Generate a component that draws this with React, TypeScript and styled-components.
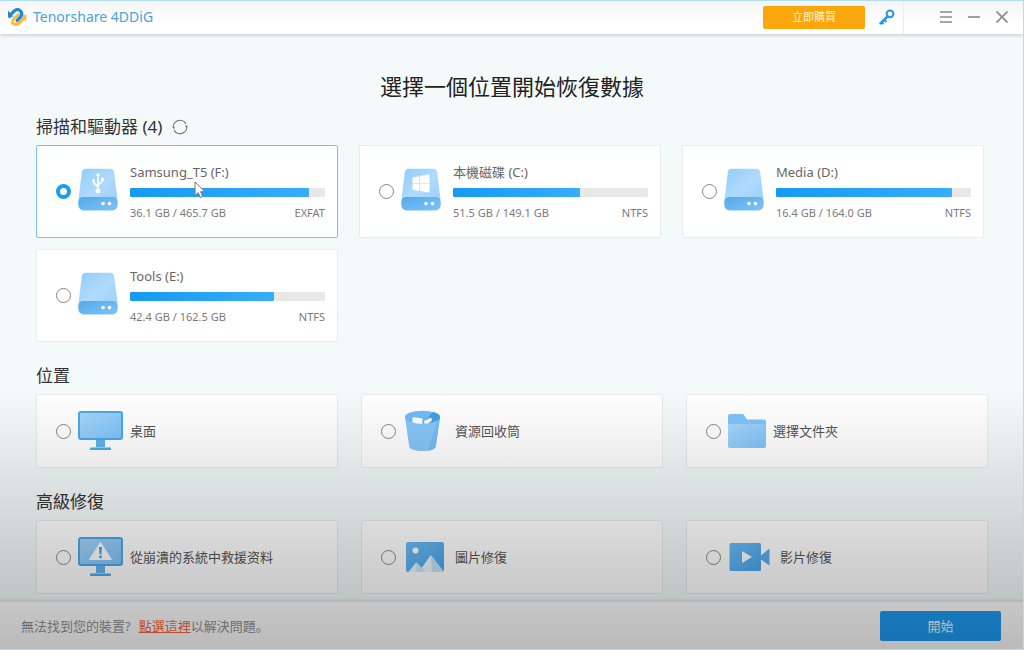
import React, { useState } from "react";
import styled, { createGlobalStyle } from "styled-components";

const GlobalStyle = createGlobalStyle`
  *, *::before, *::after { box-sizing: border-box; }
  body {
    margin: 0;
    background: #f4fafa;
    color: #333;
    font-family: "Noto Sans", "Noto Sans CJK SC", sans-serif;
    font-size: 13px;
  }
  button { font-family: inherit; cursor: pointer; }
`;

const Window = styled.div`
  position: relative;
  display: flex;
  flex-direction: column;
  min-height: 100vh;
`;

const Shade = styled.div`
  position: absolute;
  inset: 0;
  pointer-events: none;
  border: solid #b4dcf0;
  border-width: 1px 1px 1px 0;
  background: linear-gradient(to bottom, rgba(0, 0, 0, 0) 60%, rgba(0, 0, 0, 0.27) 100%);
`;

const Header = styled.header`
  display: flex;
  align-items: center;
  height: 34px;
  padding: 0 15px 0 7px;
  background: linear-gradient(to bottom, #f3f4f5, #ffffff 70%);
  box-shadow: 0 1px 4px rgba(0, 0, 0, 0.22);
`;

const Brand = styled.div`
  display: flex;
  flex: 1;
  align-items: center;
  gap: 6px;
  color: #4ba3da;
  font-size: 14px;
  line-height: 20px;
`;

const BuyButton = styled.button`
  width: 102px;
  height: 23px;
  padding: 0;
  border: 0;
  border-radius: 2px;
  background: #fba60c;
  color: #fff4cf;
  font-size: 11px;
  line-height: 16px;
`;

const IconButton = styled.button`
  display: flex;
  align-items: center;
  justify-content: center;
  width: 28px;
  height: 28px;
  padding: 0;
  border: 0;
  background: transparent;
`;

const KeyButton = styled(IconButton)`
  margin-left: 8px;
`;

const WindowControls = styled.div`
  display: flex;
  align-items: center;
  height: 34px;
  margin-left: 2px;
  padding-left: 28px;
  border-left: 1px solid #ececec;
  margin-right: -7px;
`;

const Main = styled.main`
  display: flex;
  flex: 1;
  flex-direction: column;
  padding: 36px 36px 7px;
`;

const Title = styled.h1`
  margin: 0 0 13px;
  color: #222;
  font-size: 22px;
  font-weight: 400;
  line-height: 32px;
  text-align: center;
`;

const Section = styled.section`
  & + & { margin-top: 22px; }
`;

const SectionTitle = styled.h2`
  display: flex;
  align-items: center;
  gap: 6px;
  margin: 0 0 6px;
  color: #333;
  font-size: 17px;
  font-weight: 400;
  line-height: 24px;
`;

const RefreshButton = styled(IconButton)`
  width: 24px;
  height: 24px;
`;

const DriveGrid = styled.div`
  display: grid;
  grid-template-columns: repeat(3, 1fr);
  gap: 11px 21px;
  margin-right: 4px;
`;

const PlaceGrid = styled.div`
  display: grid;
  grid-template-columns: repeat(3, 1fr);
  gap: 23px;
`;

const Card = styled.label<{ $selected: boolean }>`
  display: flex;
  align-items: center;
  padding: 0 12px 0 19px;
  border: 1px solid ${(p) => (p.$selected ? "#7fbfea" : "#e9ecec")};
  border-radius: 2px;
  background: #fff;
  cursor: pointer;
`;

const DriveCard = styled(Card)`
  min-height: 93px;
`;

const PlaceCard = styled(Card)`
  min-height: 74px;
`;

const Radio = styled.input`
  appearance: none;
  flex: none;
  width: 15px;
  height: 15px;
  margin: 0 7px 0 0;
  border: 1px solid #858585;
  border-radius: 50%;
  background: transparent;
  &:checked { border: 4px solid #1a9bf3; }
`;

const DriveInfo = styled.div`
  position: relative;
  display: flex;
  flex: 1;
  flex-direction: column;
  min-width: 0;
  margin-left: 12px;
`;

const DriveName = styled.span`
  color: #666;
  font-size: 13px;
  line-height: 20px;
`;

const Track = styled.div`
  height: 9px;
  margin: 6px 0 7px;
  overflow: hidden;
  border-radius: 1px;
  background: #e8e8e8;
`;

const Fill = styled.div`
  height: 100%;
  border-radius: 1px;
  background: linear-gradient(to right, #159af3, #37adfb);
`;

const DriveMeta = styled.div`
  display: flex;
  justify-content: space-between;
  color: #7a7a7a;
  font-size: 11px;
  line-height: 18px;
`;

const Pointer = styled.svg`
  position: absolute;
  top: 19px;
  left: 64px;
`;

const PlaceName = styled.span`
  margin-left: 7px;
  color: #555;
  font-size: 13px;
  line-height: 20px;
`;

const Footer = styled.footer`
  display: flex;
  align-items: center;
  justify-content: space-between;
  min-height: 49px;
  padding: 0 23px 0 21px;
  border-top: 1px solid #eee;
  background: #fff;
  box-shadow: 0 -1px 2px rgba(0, 0, 0, 0.1);
`;

const Hint = styled.p`
  margin: 0;
  color: #929292;
  font-size: 13px;
  line-height: 20px;
`;

const HintLink = styled.a`
  margin-left: 8px;
  color: #f8693a;
`;

const StartButton = styled.button`
  width: 121px;
  height: 30px;
  padding: 0;
  border: 0;
  border-radius: 2px;
  background: #1e9cf5;
  color: #f4faff;
  font-size: 13px;
  line-height: 20px;
`;

const Defs = () => (
  <svg width="0" height="0" style={{ position: "absolute" }} aria-hidden="true">
    <defs>
      <linearGradient id="body" x1="0" y1="0" x2="1" y2="1">
        <stop offset="0" stopColor="#8fccfb" />
        <stop offset="0.5" stopColor="#b0dafc" />
        <stop offset="1" stopColor="#9bd0fb" />
      </linearGradient>
      <linearGradient id="base" x1="0" y1="0" x2="1" y2="1">
        <stop offset="0" stopColor="#55a9ea" />
        <stop offset="1" stopColor="#7cc3fa" />
      </linearGradient>
      <linearGradient id="screen" x1="0" y1="0" x2="1" y2="1">
        <stop offset="0" stopColor="#a9d7fb" />
        <stop offset="1" stopColor="#7bc2fa" />
      </linearGradient>
      <linearGradient id="solid" x1="0" y1="0" x2="1" y2="1">
        <stop offset="0" stopColor="#6cbcf6" />
        <stop offset="1" stopColor="#48a5ec" />
      </linearGradient>
    </defs>
  </svg>
);

const LogoIcon = () => (
  <svg width="20" height="20" viewBox="0 0 20 20" fill="none" aria-hidden="true">
    <path d="M4.500 14.500c2.200 3.400 5.500 3.600 7.700 1.400l4.300-4.600c.9-1 1-1.900.9-3.100" stroke="#fbb83a" strokeWidth="3.200" />
    <path d="M6 13l5.300-5.700" stroke="#fbb83a" strokeWidth="2.600" strokeLinecap="round" />
    <path d="M2.700 9.500c-.2-.7.300-1.200 1-1.900l2.600-2.700C8.700 2.400 11.500 1.800 13.600 4c2 2.300 1.200 4.400-.4 6.100l-3 3.200" stroke="#2389cf" strokeWidth="3.200" strokeLinecap="round" />
    <path d="M1 3.500v6.200h5.700z" fill="#2389cf" />
    <path d="M19.300 7v6.500l-5.300-.6z" fill="#fbb83a" />
  </svg>
);

const KeyIcon = () => (
  <svg width="16" height="16" viewBox="0 0 16 16" fill="none" stroke="#2395ea" aria-hidden="true">
    <circle cx="11" cy="4.800" r="3.400" strokeWidth="2" />
    <path d="M8.600 7.400L1.500 14.400" strokeWidth="2.400" strokeLinecap="round" />
    <path d="M5.200 10.800l2.200 2.200M2.600 13.200l1.900 1.900" strokeWidth="2" />
  </svg>
);

const MenuIcon = () => (
  <svg width="12" height="12" viewBox="0 0 12 12" stroke="#8a8a8a" strokeWidth="1.300" aria-hidden="true">
    <path d="M0 1h12M0 6h12M0 11h12" />
  </svg>
);

const MinimizeIcon = () => (
  <svg width="12" height="12" viewBox="0 0 12 12" stroke="#8a8a8a" strokeWidth="1.600" aria-hidden="true">
    <path d="M0 6h12" />
  </svg>
);

const CloseIcon = () => (
  <svg width="12" height="12" viewBox="0 0 12 12" stroke="#8a8a8a" strokeWidth="1.600" aria-hidden="true">
    <path d="M0.500 0.500l11 11M11.500 0.500l-11 11" />
  </svg>
);

const RefreshIcon = () => (
  <svg width="16" height="16" viewBox="0 0 16 16" fill="none" stroke="#777" strokeWidth="1.200" aria-hidden="true">
    <path d="M1.300 8.800A6.700 6.700 0 0 1 13.900 4.900M14.700 7.200A6.700 6.700 0 0 1 2.100 11.100" />
    <path d="M14.700 8.800l.2-2-1.900.4M1.300 7.200l-.2 2 1.900-.4" strokeWidth="1" />
  </svg>
);

type DriveKind = "usb" | "windows" | "plain";

const DriveIcon = ({ kind }: { kind: DriveKind }) => (
  <svg width="40" height="48" viewBox="0 0 40 48" aria-hidden="true">
    <path d="M7.500.8h25c2.200 0 3.300 1.300 3.600 3.200L39.500 31 37 36H3L.5 31 3.900 4C4.200 2.100 5.300.8 7.500.8z" fill="url(#body)" />
    <path d="M5.500 29h29c3 0 5.200 2 5.200 4.800v2.700c0 3.500-2.300 5.900-5.700 5.900H6c-3.400 0-5.700-2.400-5.700-5.900v-2.700C.3 31 2.500 29 5.500 29z" fill="url(#base)" />
    <circle cx="25" cy="35.600" r="1.800" fill="#fff" />
    <circle cx="31.500" cy="35.600" r="1.800" fill="#fff" />
    {kind === "usb" && (
      <g fill="none" stroke="#fff" strokeWidth="1.600">
        <path d="M20 22V7M20 20c0-3.500-4.500-2.500-4.500-7M20 18c0-3 4.500-2.500 4.500-6" />
        <path d="M20 4.500l2.300 3.600h-4.600z" fill="#fff" stroke="none" />
        <circle cx="20" cy="23" r="2.400" fill="#fff" stroke="none" />
        <circle cx="15.500" cy="12.500" r="1.500" fill="#fff" stroke="none" />
        <path d="M23 9.800h3v3h-3z" fill="#fff" stroke="none" />
      </g>
    )}
    {kind === "windows" && (
      <path d="M11.500 9.500l6.800-1.200v7.200h-6.800zM18.900 8.100l9.600-1.700v9.100h-9.600zM11.500 16.100h6.800v6.800l-6.800-1.200zM18.900 16.100h9.600v8.400L18.900 23z" fill="#fff" />
    )}
  </svg>
);

const MonitorIcon = ({ warning }: { warning?: boolean }) => (
  <svg width="45" height="42" viewBox="0 0 45 42" aria-hidden="true">
    <path d="M18 29h9v8h-9z" fill="#62b4ee" />
    <path d="M13 37.500h19c.6 0 1 .5 1 1.200s-.4 1.300-1 1.300H13c-.6 0-1-.6-1-1.300s.4-1.200 1-1.200z" fill="#4ba9e8" />
    <rect x="1" y="2" width="43" height="27" rx="2" fill="url(#screen)" stroke="#4ba9e8" strokeWidth="2" />
    {warning && (
      <>
        <path d="M22.500 6.500L33.500 23.500h-22z" fill="#fff" stroke="#fff" strokeWidth="1" strokeLinejoin="round" />
        <path d="M21 11h3l-.6 7.500h-1.800z" fill="#4ba1df" />
        <circle cx="22.500" cy="21" r="1.400" fill="#4ba1df" />
      </>
    )}
  </svg>
);

const BinIcon = () => (
  <svg width="45" height="46" viewBox="0 0 45 46" aria-hidden="true">
    <path d="M2 9l4.200 29.500C6.700 41.300 12 43 19.500 43s12.800-1.700 13.300-4.500L37 9z" fill="#85c6f8" />
    <path d="M37 9l-4.200 29.500c-.3 1.800-3.300 3.500-7.800 4.200L34 13z" fill="#76bdf4" />
    <ellipse cx="19.500" cy="9" rx="17.500" ry="6.300" fill="#6fbcf5" />
    <path d="M30 3.900L20 15.300c9.500 0 17-2.600 17-6.300 0-2.100-2.700-4-7-5.100z" fill="#459fe2" />
    <path d="M9.500 9.200l9.800 1v5.600c-3.800 0-7.300-.6-9.800-1.600zM21 13l7-3.500 1 3-4 2.900-3.500.4z" fill="#fff" />
  </svg>
);

const FolderIcon = () => (
  <svg width="38" height="38" viewBox="0 0 38 38" aria-hidden="true">
    <path d="M0 4a2 2 0 0 1 2-2h12c1 0 1.500.4 2 1l3 4.500h17a2 2 0 0 1 2 2V34H0z" fill="#7ec4f9" />
    <path d="M0 12h38v22a2 2 0 0 1-2 2H2a2 2 0 0 1-2-2z" fill="url(#screen)" />
  </svg>
);

const PictureIcon = () => (
  <svg width="45" height="34" viewBox="0 0 45 34" aria-hidden="true">
    <rect x="3" y="2" width="38" height="30" rx="2" fill="url(#solid)" />
    <circle cx="12.500" cy="10.500" r="3" fill="#fff" />
    <path d="M5.500 32l7.700-9.800L22.500 32z" fill="#e8f5ff" />
    <path d="M13.200 22.200V32h9.300z" fill="#cce7fb" />
    <path d="M18.500 28l9.300-13L41 32H22.500z" fill="#e8f5ff" />
    <path d="M27.800 15L41 32H29z" fill="#c2e3fb" />
  </svg>
);

const VideoIcon = () => (
  <svg width="45" height="32" viewBox="0 0 45 32" aria-hidden="true">
    <rect x="1.500" y="2" width="31.500" height="28" rx="1.500" fill="url(#solid)" />
    <path d="M33 14.500L41.500 7.500v17L33 18.500z" fill="#56adee" />
    <path d="M14 10v12l10-6z" fill="#fff" />
  </svg>
);

const drives: { id: string; name: string; size: string; fs: string; used: number; kind: DriveKind }[] = [
  { id: "f", name: "Samsung_T5 (F:)", size: "36.1 GB / 465.7 GB", fs: "EXFAT", used: 92, kind: "usb" },
  { id: "c", name: "本機磁碟 (C:)", size: "51.5 GB / 149.1 GB", fs: "NTFS", used: 65, kind: "windows" },
  { id: "d", name: "Media (D:)", size: "16.4 GB / 164.0 GB", fs: "NTFS", used: 90, kind: "plain" },
  { id: "e", name: "Tools (E:)", size: "42.4 GB / 162.5 GB", fs: "NTFS", used: 74, kind: "plain" },
];

const groups = [
  {
    title: "位置",
    items: [
      { id: "desktop", name: "桌面", icon: <MonitorIcon /> },
      { id: "bin", name: "資源回收筒", icon: <BinIcon /> },
      { id: "folder", name: "選擇文件夾", icon: <FolderIcon /> },
    ],
  },
  {
    title: "高級修復",
    items: [
      { id: "crash", name: "從崩潰的系統中救援资料", icon: <MonitorIcon warning /> },
      { id: "photo", name: "圖片修復", icon: <PictureIcon /> },
      { id: "video", name: "影片修復", icon: <VideoIcon /> },
    ],
  },
];

export default function App() {
  const [selected, setSelected] = useState("f");
  const radio = (id: string) => (
    <Radio type="radio" name="location" value={id} checked={selected === id} onChange={() => setSelected(id)} />
  );

  return (
    <Window>
      <GlobalStyle />
      <Defs />
      <Header>
        <Brand>
          <LogoIcon />
          <span>Tenorshare 4DDiG</span>
        </Brand>
        <BuyButton type="button">立即購買</BuyButton>
        <KeyButton type="button" aria-label="註冊"><KeyIcon /></KeyButton>
        <WindowControls>
          <IconButton type="button" aria-label="選單"><MenuIcon /></IconButton>
          <IconButton type="button" aria-label="最小化"><MinimizeIcon /></IconButton>
          <IconButton type="button" aria-label="關閉"><CloseIcon /></IconButton>
        </WindowControls>
      </Header>
      <Main>
        <Title>選擇一個位置開始恢復數據</Title>
        <Section>
          <SectionTitle>
            掃描和驅動器 (4)
            <RefreshButton type="button" aria-label="重新整理"><RefreshIcon /></RefreshButton>
          </SectionTitle>
          <DriveGrid>
            {drives.map((d) => (
              <DriveCard key={d.id} $selected={selected === d.id}>
                {radio(d.id)}
                <DriveIcon kind={d.kind} />
                <DriveInfo>
                  <DriveName>{d.name}</DriveName>
                  <Track>
                    <Fill style={{ width: `${d.used}%` }} />
                  </Track>
                  <DriveMeta>
                    <span>{d.size}</span>
                    <span>{d.fs}</span>
                  </DriveMeta>
                  {d.id === "f" && (
                    <Pointer width="12" height="18" viewBox="0 0 12 18" aria-hidden="true">
                      <path d="M1 1v13.500l3.200-2.900 2.300 5 2.300-1-2.200-4.900H11z" fill="#fff" stroke="#777" strokeWidth="1" />
                    </Pointer>
                  )}
                </DriveInfo>
              </DriveCard>
            ))}
          </DriveGrid>
        </Section>
        {groups.map((g) => (
          <Section key={g.title}>
            <SectionTitle>{g.title}</SectionTitle>
            <PlaceGrid>
              {g.items.map((item) => (
                <PlaceCard key={item.id} $selected={selected === item.id}>
                  {radio(item.id)}
                  {item.icon}
                  <PlaceName>{item.name}</PlaceName>
                </PlaceCard>
              ))}
            </PlaceGrid>
          </Section>
        ))}
      </Main>
      <Footer>
        <Hint>
          無法找到您的裝置?<HintLink href="#help">點選這裡</HintLink>以解決問題。
        </Hint>
        <StartButton type="button">開始</StartButton>
      </Footer>
      <Shade />
    </Window>
  );
}
